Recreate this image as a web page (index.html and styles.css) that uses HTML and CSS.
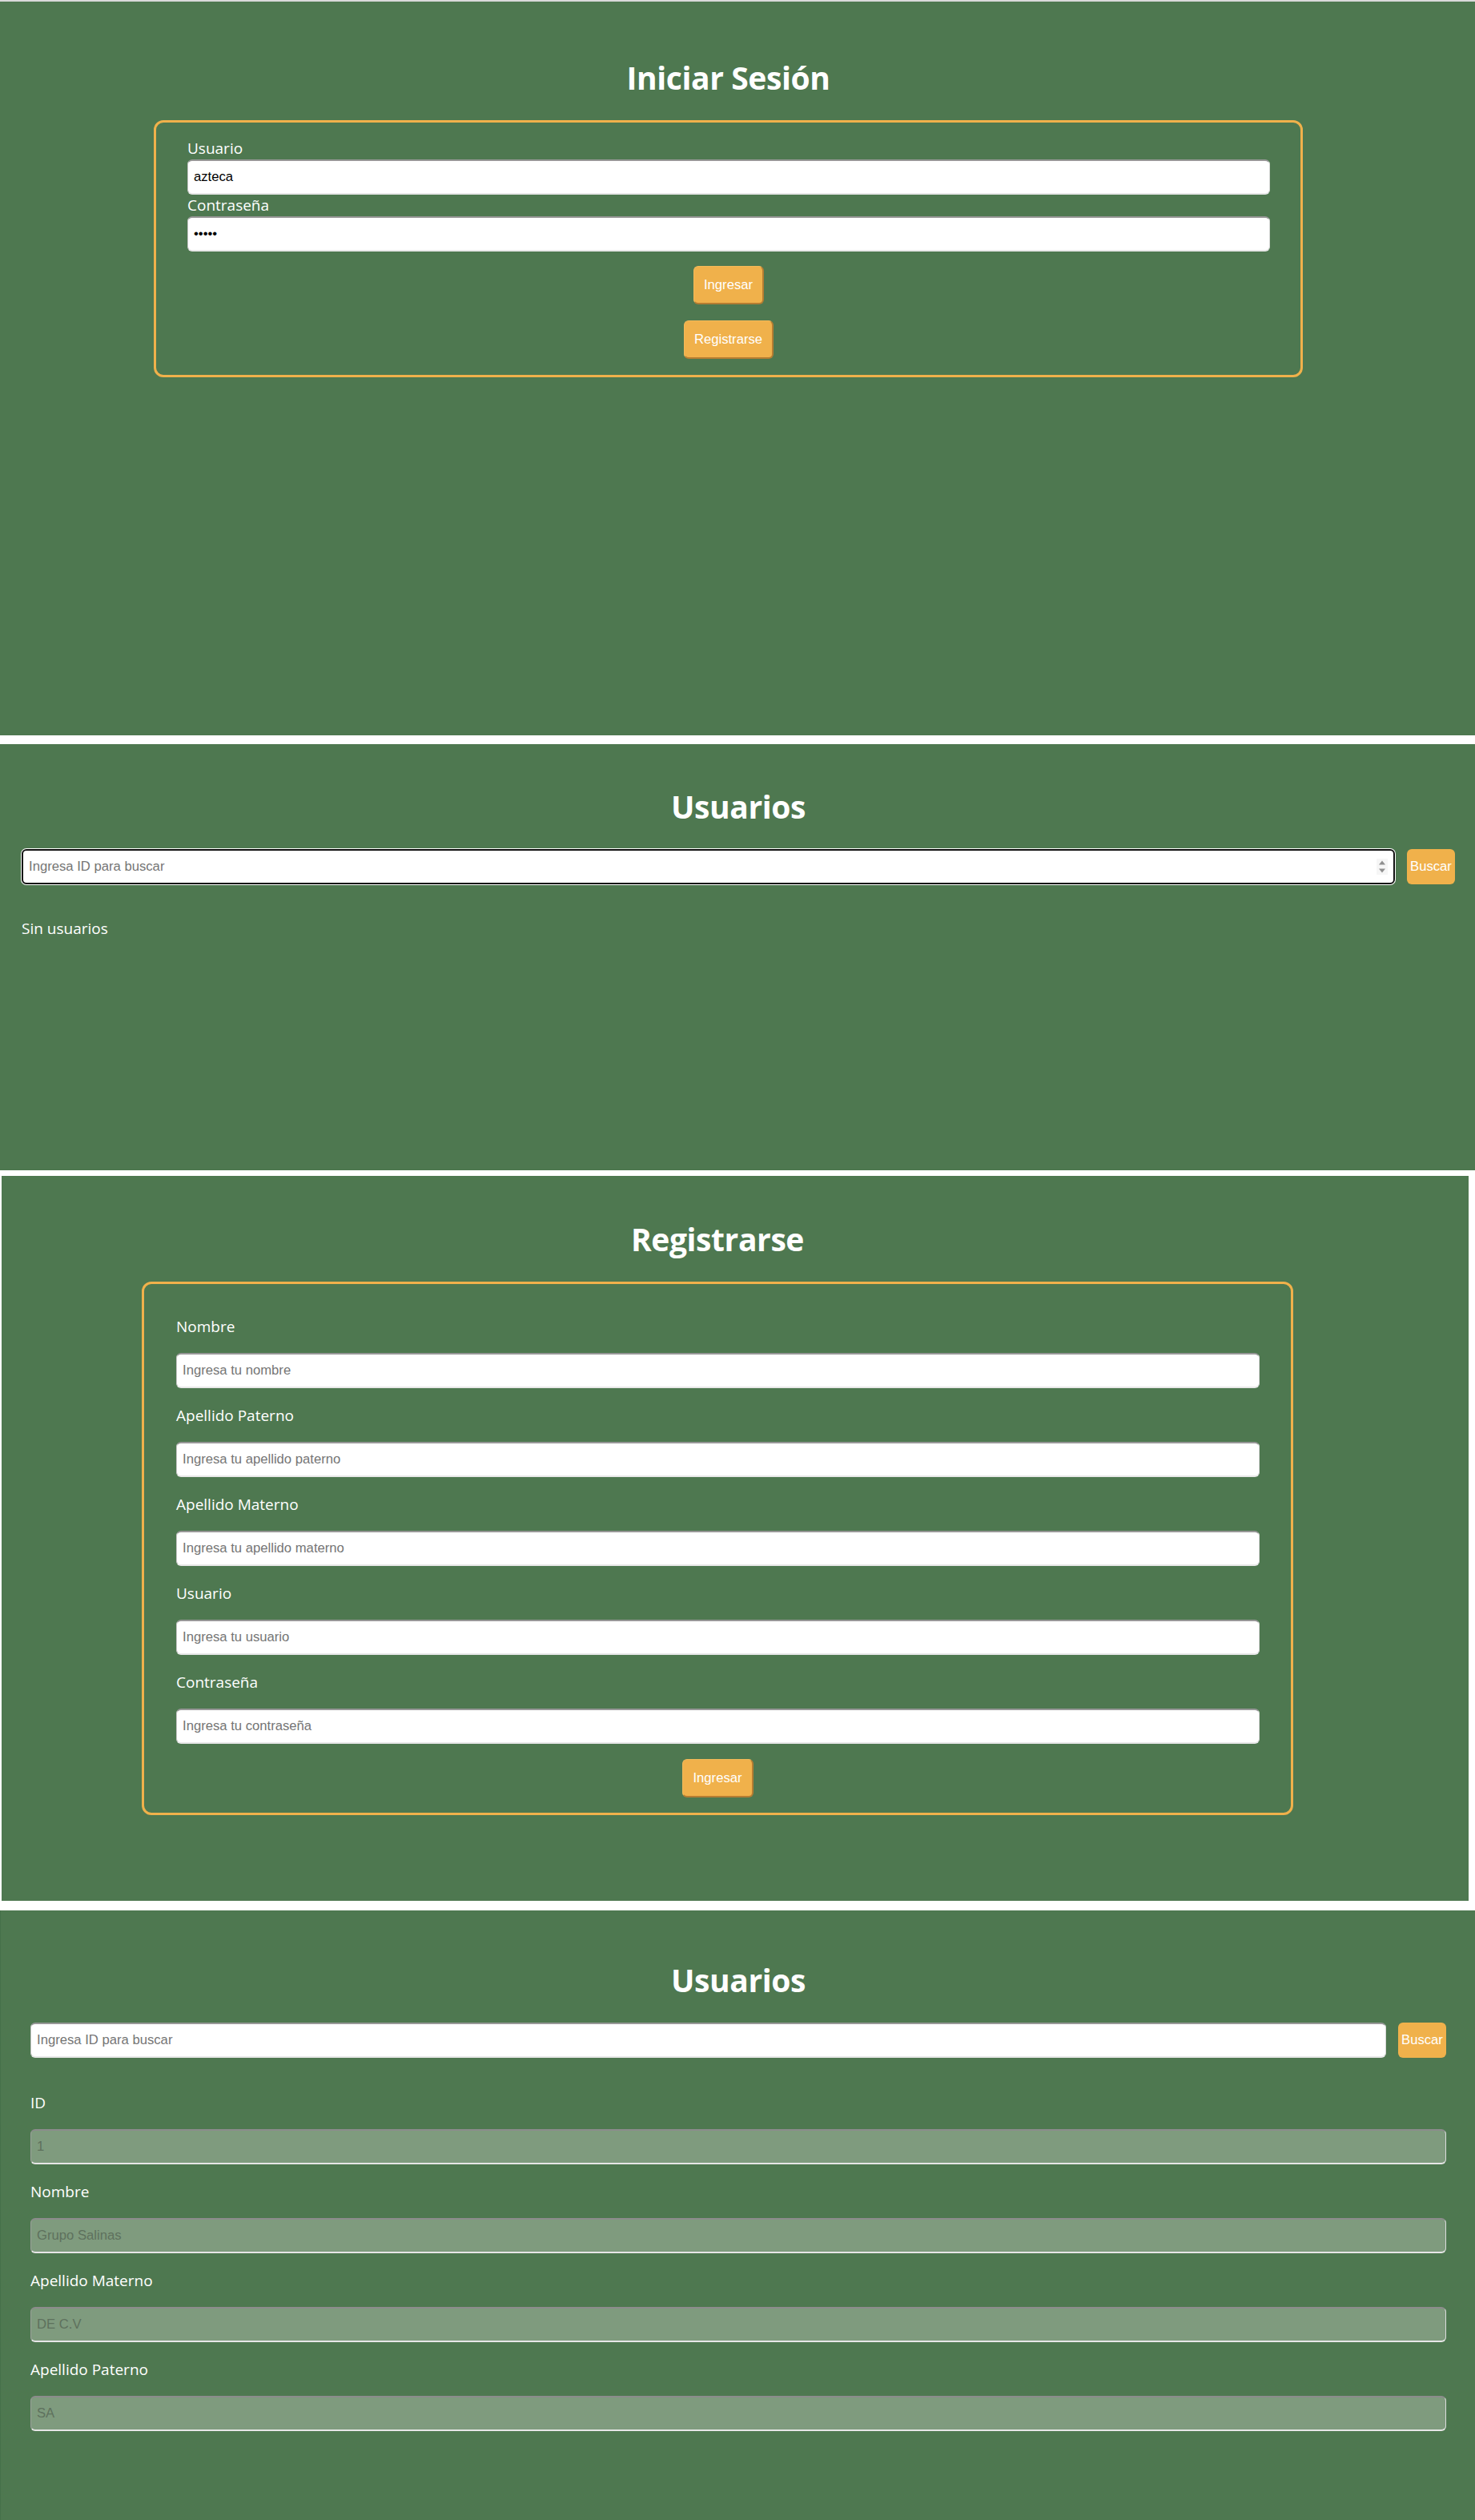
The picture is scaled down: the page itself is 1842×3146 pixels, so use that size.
FILE: index.html
```html
<!DOCTYPE html>
<html lang="es">
<head>
<meta charset="utf-8">
<title>Usuarios</title>
<link rel="stylesheet" href="styles.css">
</head>
<body>
<main class="sheet">

  <section class="panel panel-login">
    <h1 class="title">Iniciar Sesión</h1>
    <form class="card card-login">
      <label class="label" for="login-user">Usuario</label>
      <input class="field" id="login-user" type="text" value="azteca">
      <label class="label" for="login-pass">Contraseña</label>
      <input class="field" id="login-pass" type="password" value="12345">
      <div class="actions actions-login">
        <button class="btn btn-raised" type="button">Ingresar</button>
        <button class="btn btn-raised" type="button">Registrarse</button>
      </div>
    </form>
  </section>

  <section class="panel panel-empty">
    <h1 class="title">Usuarios</h1>
    <div class="search">
      <div class="search-box">
        <input class="field field-focus" type="number" placeholder="Ingresa ID para buscar">
        <svg class="spinner" width="14" height="20" viewBox="0 0 14 20" aria-hidden="true">
          <rect x="0" y="0" width="14" height="20" fill="#f6f6f6"/>
          <path d="M3 7.5 L7 2.5 L11 7.5 Z" fill="#8f8f8f"/>
          <path d="M3 12.5 L7 17.5 L11 12.5 Z" fill="#8f8f8f"/>
        </svg>
      </div>
      <button class="btn btn-flat" type="button">Buscar</button>
    </div>
    <p class="empty">Sin usuarios</p>
  </section>

  <section class="panel panel-register">
    <h1 class="title">Registrarse</h1>
    <form class="card card-register">
      <label class="label label-spaced" for="r-nombre">Nombre</label>
      <input class="field" id="r-nombre" type="text" placeholder="Ingresa tu nombre">
      <label class="label label-spaced" for="r-pat">Apellido Paterno</label>
      <input class="field" id="r-pat" type="text" placeholder="Ingresa tu apellido paterno">
      <label class="label label-spaced" for="r-mat">Apellido Materno</label>
      <input class="field" id="r-mat" type="text" placeholder="Ingresa tu apellido materno">
      <label class="label label-spaced" for="r-user">Usuario</label>
      <input class="field" id="r-user" type="text" placeholder="Ingresa tu usuario">
      <label class="label label-spaced" for="r-pass">Contraseña</label>
      <input class="field" id="r-pass" type="password" placeholder="Ingresa tu contraseña">
      <div class="actions actions-register">
        <button class="btn btn-raised" type="button">Ingresar</button>
      </div>
    </form>
  </section>

  <section class="panel panel-detail">
    <h1 class="title">Usuarios</h1>
    <div class="search search-detail">
      <div class="search-box">
        <input class="field" type="number" placeholder="Ingresa ID para buscar">
      </div>
      <button class="btn btn-flat" type="button">Buscar</button>
    </div>
    <div class="details">
      <label class="label label-spaced" for="d-id">ID</label>
      <input class="field field-readonly" id="d-id" type="text" value="1" readonly>
      <label class="label label-spaced" for="d-nombre">Nombre</label>
      <input class="field field-readonly" id="d-nombre" type="text" value="Grupo Salinas" readonly>
      <label class="label label-spaced" for="d-mat">Apellido Materno</label>
      <input class="field field-readonly" id="d-mat" type="text" value="DE C.V" readonly>
      <label class="label label-spaced" for="d-pat">Apellido Paterno</label>
      <input class="field field-readonly" id="d-pat" type="text" value="SA" readonly>
    </div>
  </section>

</main>
</body>
</html>
```

FILE: styles.css
```css
* {
  box-sizing: border-box;
}

html,
body {
  margin: 0;
  padding: 0;
}

body {
  width: 1842px;
  height: 3146px;
  overflow: hidden;
  background: #ffffff;
  color: #ffffff;
  font-family: "Open Sans", "Noto Sans", sans-serif;
}

.sheet {
  display: flex;
  flex-direction: column;
}

.panel {
  background: #4e7850;
}

.panel-login {
  height: 918px;
  border-top: 2px solid #dadada;
  padding: 68px 23px 0 0;
}

.panel-empty {
  height: 532px;
  margin-top: 11px;
  padding: 51px 25px 0 27px;
}

.panel-register {
  width: 1832px;
  height: 905px;
  margin-top: 7px;
  margin-left: 2px;
  padding: 52px 44px 0 0;
}

.panel-detail {
  height: 761px;
  margin-top: 12px;
  padding: 60px 36px 0 37px;
  border-left: 1px solid #45704a;
}

.title {
  margin: 0 0 27px;
  font-size: 39px;
  line-height: 53px;
  font-weight: 700;
  letter-spacing: -0.4px;
  text-align: center;
}

.card {
  margin: 0 auto;
  border: 3px solid #f0b14b;
  border-radius: 12px;
}

.card-login {
  width: 1435px;
  padding: 19px 38px 20px 39px;
}

.card-register {
  width: 1438px;
  padding: 19px 39px 19px 40px;
}

.label {
  display: block;
  font-size: 19px;
  line-height: 27px;
}

.label-spaced {
  margin: 21px 0 19px;
}

.field {
  display: block;
  width: 100%;
  height: 44px;
  margin: 0;
  padding: 0 7px;
  background: #ffffff;
  border-style: solid;
  border-width: 2px 1px 2px 1px;
  border-color: #979797 #d9d9d9 #e8e8e8 #c4c4c4;
  border-radius: 6px;
  font-family: "Liberation Sans", Arial, sans-serif;
  font-size: 16.67px;
  font-weight: 400;
  color: #000000;
  outline: none;
  -moz-appearance: textfield;
}

.field::placeholder {
  color: #757575;
}

.field::-webkit-inner-spin-button,
.field::-webkit-outer-spin-button {
  -webkit-appearance: none;
  margin: 0;
}

.field-focus {
  border: 2px solid #101010;
  box-shadow: 0 0 0 1px #ffffff;
}

.field-readonly {
  background: #7f9b7e;
  color: #5e715d;
  border-color: #8c8c8c #dcdcdc #e6e6e6 #9a9f9a;
}

.actions {
  display: flex;
  flex-direction: column;
  align-items: center;
}

.actions-login {
  margin-top: 18px;
  gap: 20px;
}

.actions-register {
  margin-top: 19px;
}

.btn {
  font-family: "Liberation Sans", Arial, sans-serif;
  font-size: 16.67px;
  color: #ffffff;
  background: #f0b14b;
  border-radius: 6px;
  cursor: pointer;
}

.btn-raised {
  height: 48px;
  padding: 0 12px;
  border-style: solid;
  border-width: 1px 2px 2px 1px;
  border-color: #f3b95a #b57d32 #b57d32 #f3b95a;
}

.btn-flat {
  flex: none;
  width: 60px;
  height: 44px;
  margin-left: 15px;
  padding: 0;
  border: none;
}

.search {
  display: flex;
  align-items: flex-start;
}

.search-detail {
  margin-bottom: 22px;
}

.search-box {
  position: relative;
  flex: 1;
}

.spinner {
  position: absolute;
  right: 9px;
  top: 12px;
}

.details {
  display: flex;
  flex-direction: column;
}

.empty {
  margin: 42px 0 0;
  font-size: 19px;
  line-height: 27px;
}
```
